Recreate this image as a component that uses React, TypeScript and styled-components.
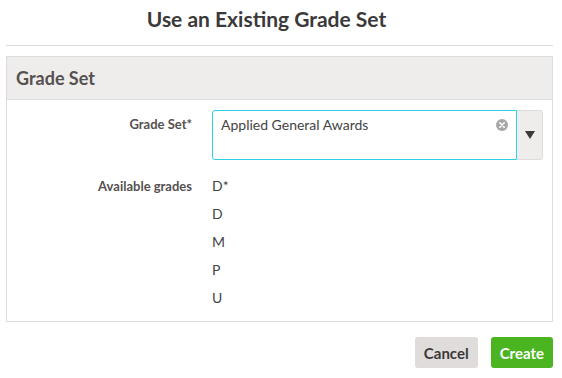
import React from 'react';
import styled, { createGlobalStyle } from 'styled-components';

const GlobalStyle = createGlobalStyle`
  html, body {
    margin: 0;
    padding: 0;
    background: #ffffff;
    font-family: Lato, "Open Sans", Arial, sans-serif;
    color: #444;
  }
`;

const Modal = styled.div`
  width: 562px;
  box-sizing: border-box;
  padding: 0 9px 0 6px;
`;

const Title = styled.h1`
  margin: 0;
  padding: 5px 26px 13px 0;
  text-align: center;
  font-size: 21px;
  font-weight: 700;
  color: #3b3939;
  line-height: 27px;
  border-bottom: 1px solid #dcdcdc;
`;

const Panel = styled.section`
  margin-top: 10px;
  border: 1px solid #dcdcdc;
`;

const PanelHeader = styled.div`
  height: 42px;
  display: flex;
  align-items: center;
  padding: 0 9px;
  background: #eeedeb;
  border-bottom: 1px solid #dcdcdc;
  font-size: 18px;
  font-weight: 700;
  color: #555151;
`;

const PanelBody = styled.div`
  padding: 10px 10px 9px 0;
  display: flex;
  flex-direction: column;
  gap: 12px;
`;

const Row = styled.div`
  display: grid;
  grid-template-columns: 185px 1fr;
  column-gap: 20px;
`;

const Label = styled.div`
  text-align: right;
  font-size: 13px;
  font-weight: 700;
  color: #555151;
  line-height: 20px;
  padding-top: 4px;
`;

const SelectWrap = styled.div`
  display: flex;
  height: 50px;
  width: 331px;
`;

const SelectBox = styled.div`
  position: relative;
  flex: 1;
  box-sizing: border-box;
  border: 1px solid #2bd2e6;
  border-radius: 3px 0 0 3px;
  padding: 4px 8px;
  font-size: 14px;
  line-height: 20px;
  color: #444;
`;

const ClearButton = styled.span`
  position: absolute;
  right: 8px;
  top: 8px;
  display: flex;
`;

const DropButton = styled.div`
  width: 26px;
  box-sizing: border-box;
  background: #eeedeb;
  border: 1px solid #dcdcdc;
  border-left: none;
  border-radius: 0 3px 3px 0;
  display: flex;
  align-items: center;
  justify-content: center;
`;

const GradeList = styled.div`
  display: flex;
  flex-direction: column;
`;

const Grade = styled.div`
  font-size: 14px;
  line-height: 28px;
  color: #444;
`;

const Footer = styled.div`
  display: flex;
  justify-content: flex-end;
  gap: 13px;
  padding-top: 15px;
`;

const Button = styled.button<{ primary?: boolean }>`
  height: 31px;
  padding: 0 9px;
  border: none;
  border-radius: 3px;
  font-family: inherit;
  font-size: 15px;
  font-weight: 700;
  background: ${props => props.primary ? '#4bb521' : '#e0dcdb'};
  color: ${props => props.primary ? '#ffffff' : '#3b3939'};
  cursor: pointer;
`;

const grades = ['D*', 'D', 'M', 'P', 'U'];

export default function App() {
  return (
    <>
      <GlobalStyle />
      <Modal>
        <Title>Use an Existing Grade Set</Title>
        <Panel>
          <PanelHeader>Grade Set</PanelHeader>
          <PanelBody>
            <Row>
              <Label>Grade Set*</Label>
              <SelectWrap>
                <SelectBox>
                  Applied General Awards
                  <ClearButton>
                    <svg width="12" height="12" viewBox="0 0 12 12">
                      <circle cx="6" cy="6" r="6" fill="#a8a6a6" />
                      <path d="M3.8 3.8 L8.2 8.2 M8.2 3.8 L3.8 8.2" stroke="#fff" strokeWidth="1.6" strokeLinecap="round" />
                    </svg>
                  </ClearButton>
                </SelectBox>
                <DropButton>
                  <svg width="10" height="8" viewBox="0 0 10 8">
                    <path d="M0 0 H10 L5 8 Z" fill="#3b3939" />
                  </svg>
                </DropButton>
              </SelectWrap>
            </Row>
            <Row>
              <Label>Available grades</Label>
              <GradeList>
                {grades.map(g => (
                  <Grade key={g}>{g}</Grade>
                ))}
              </GradeList>
            </Row>
          </PanelBody>
        </Panel>
        <Footer>
          <Button>Cancel</Button>
          <Button primary>Create</Button>
        </Footer>
      </Modal>
    </>
  );
}
